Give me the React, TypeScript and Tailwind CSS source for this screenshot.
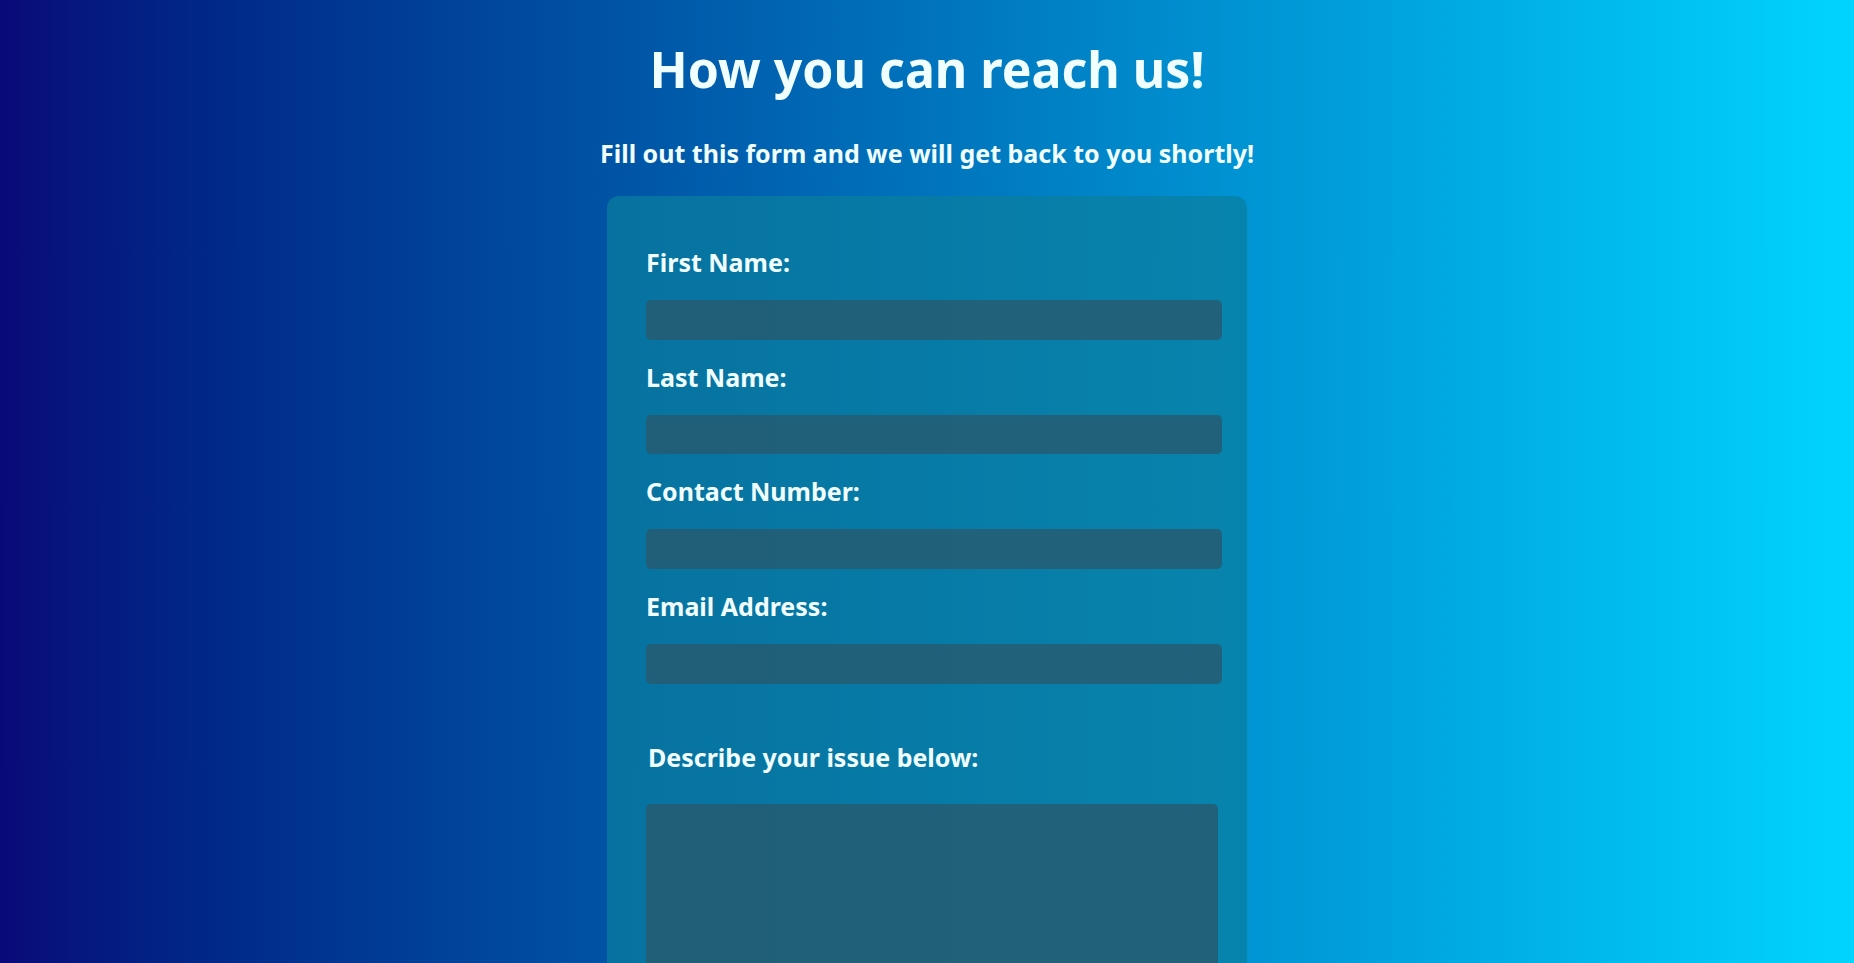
import React from "react";

const fields = ["First Name:", "Last Name:", "Contact Number:", "Email Address:"];

export default function App() {
  return (
    <div
      className="h-screen w-full overflow-hidden bg-gradient-to-r from-[#090979] to-[#00d4ff] text-[#f0ffff] font-bold"
      style={{ fontFamily: '"Noto Sans", "Open Sans", sans-serif' }}
    >
      <div className="flex flex-col items-center">
        <h1 className="pt-[37px] text-[50px] leading-[64px] font-bold">How you can reach us!</h1>
        <p className="mt-[37px] text-[25px] leading-[30px] font-bold">
          Fill out this form and we will get back to you shortly!
        </p>
        <form className="mt-[28px] w-[640px] rounded-xl bg-[rgba(10,126,158,0.72)] pl-[39px] pt-[50px] pb-[40px]">
          {fields.map((f) => (
            <div key={f} className="flex flex-col mb-[21px]">
              <label className="block text-[25px] leading-[32px] mb-[22px]">{f}</label>
              <input
                type="text"
                className="h-[39.67px] w-[576px] rounded-[5px] border-0 bg-[rgba(40,90,110,0.8)] outline-none"
              />
            </div>
          ))}
          <div className="flex flex-col mt-[57px]">
            <label className="block ml-[2px] text-[25px] leading-[32px] mb-[31px]">Describe your issue below:</label>
            <textarea className="h-[260px] w-[572px] resize-none rounded-[5px] border-0 bg-[rgba(40,90,110,0.8)] outline-none" />
          </div>
        </form>
      </div>
    </div>
  );
}
